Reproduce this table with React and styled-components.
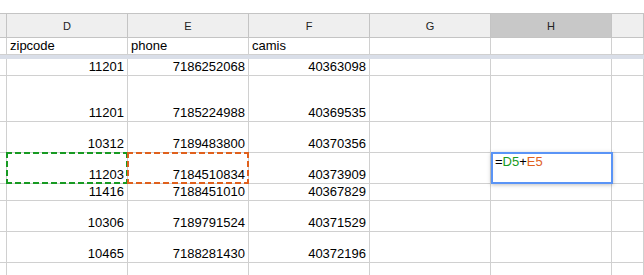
import React from "react";
import styled, { createGlobalStyle } from "styled-components";

const GlobalStyle = createGlobalStyle`
	body {
		margin: 0;
		background: #ffffff;
		font-family: "Liberation Sans", Arial, sans-serif;
		overflow: hidden;
	}
`;

const COLUMNS = "7px 121px 121px 121px 121px 121px 1fr";

const Sheet = styled.div`
	width: 644px;
	height: 275px;
	padding-top: 13px;
	box-sizing: border-box;
	overflow: hidden;
`;

const Grid = styled.div`
	border-top: 1px solid #c4c4c4;
`;

const Row = styled.div`
	display: grid;
	grid-template-columns: ${COLUMNS};
	height: ${props => props.height}px;
`;

const HeaderCell = styled.div`
	display: flex;
	align-items: center;
	justify-content: center;
	box-sizing: border-box;
	border-right: 1px solid #c4c4c4;
	border-bottom: 1px solid #c4c4c4;
	background: ${props => (props.selected ? "#c8c8c8" : "#efefef")};
	color: #222222;
	font-size: 11px;
`;

const Cell = styled.div`
	position: relative;
	display: flex;
	align-items: flex-end;
	justify-content: ${props => (props.numeric ? "flex-end" : "flex-start")};
	box-sizing: border-box;
	padding: 0 3px;
	border-right: 1px solid #d0d0d0;
	border-bottom: ${props => (props.noBottom ? "none" : "1px solid #d0d0d0")};
	color: #000000;
	font-size: 13px;
	line-height: 16px;
	white-space: nowrap;
`;

const FrozenBar = styled.div`
	height: 4px;
	background: #d9dee8;
`;

const Marquee = styled.div`
	position: absolute;
	top: -1px;
	left: -1px;
	width: 122px;
	height: 32px;
	box-sizing: border-box;
	pointer-events: none;
	background-image:
		repeating-linear-gradient(90deg, ${p => p.color} 0 6px, transparent 6px 9px),
		repeating-linear-gradient(90deg, ${p => p.color} 0 6px, transparent 6px 9px),
		repeating-linear-gradient(180deg, ${p => p.color} 0 6px, transparent 6px 9px),
		repeating-linear-gradient(180deg, ${p => p.color} 0 6px, transparent 6px 9px);
	background-size: 100% 2px, 100% 2px, 2px 100%, 2px 100%;
	background-position: 0 0, 0 100%, 0 0, 100% 0;
	background-repeat: no-repeat;
`;

const Editor = styled.div`
	position: absolute;
	top: -1px;
	left: 0;
	width: 122px;
	height: 32px;
	box-sizing: border-box;
	padding: 0 2px;
	background: #ffffff;
	border: 2px solid #5a94f6;
	box-shadow: 0 1px 4px rgba(0, 0, 0, 0.25);
	font-size: 13px;
	line-height: 16px;
	color: #000000;
	z-index: 2;
`;

const Ref = styled.span`
	color: ${props => props.color};
`;

const GREEN = "#179a22";
const ORANGE = "#e0601c";

const rows = [
	{ height: 17, d: "11201", e: "7186252068", f: "40363098" },
	{ height: 46, d: "11201", e: "7185224988", f: "40369535" },
	{ height: 31, d: "10312", e: "7189483800", f: "40370356" },
	{ height: 31, d: "11203", e: "7184510834", f: "40373909", active: true },
	{ height: 17, d: "11416", e: "7188451010", f: "40367829" },
	{ height: 31, d: "10306", e: "7189791524", f: "40371529" },
	{ height: 31, d: "10465", e: "7188281430", f: "40372196" },
	{ height: 20 }
];

const App = () => {
	return (
		<Sheet>
			<GlobalStyle />
			<Grid>
				<Row height={24}>
					<HeaderCell />
					<HeaderCell>D</HeaderCell>
					<HeaderCell>E</HeaderCell>
					<HeaderCell>F</HeaderCell>
					<HeaderCell>G</HeaderCell>
					<HeaderCell selected>H</HeaderCell>
					<HeaderCell />
				</Row>
				<Row height={17}>
					<Cell />
					<Cell>zipcode</Cell>
					<Cell>phone</Cell>
					<Cell>camis</Cell>
					<Cell />
					<Cell />
					<Cell />
				</Row>
				<FrozenBar />
				{rows.map((row, i) => (
					<Row height={row.height} key={i}>
						<Cell />
						<Cell numeric>
							{row.d}
							{row.active && <Marquee color={GREEN} />}
						</Cell>
						<Cell numeric>
							{row.e}
							{row.active && <Marquee color={ORANGE} />}
						</Cell>
						<Cell numeric>{row.f}</Cell>
						<Cell />
						<Cell>
							{row.active && (
								<Editor>
									=<Ref color={GREEN}>D5</Ref>+<Ref color={ORANGE}>E5</Ref>
								</Editor>
							)}
						</Cell>
						<Cell />
					</Row>
				))}
			</Grid>
		</Sheet>
	);
};

export default App;
